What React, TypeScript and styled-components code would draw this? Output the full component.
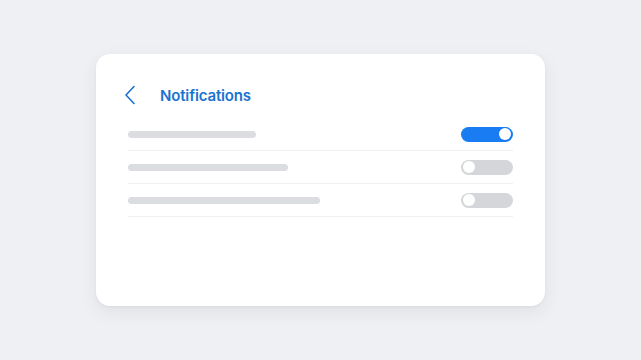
import React from "react";
import styled, { createGlobalStyle } from "styled-components";

const Global = createGlobalStyle`
  html, body { margin: 0; padding: 0; background: #eff0f3; }
  body { font-family: Inter, "Noto Sans", sans-serif; }
`;

const Page = styled.div`
  width: 641px;
  height: 360px;
  box-sizing: border-box;
  padding: 54px 96px 0 96px;
`;

const Card = styled.div`
  width: 449px;
  height: 252px;
  box-sizing: border-box;
  background: #ffffff;
  border-radius: 14px;
  box-shadow: 0 6px 18px rgba(40, 50, 70, 0.08), 0 1px 3px rgba(40, 50, 70, 0.05);
  padding: 28px 32px 0 32px;
`;

const Header = styled.div`
  display: flex;
  align-items: center;
  height: 26px;
  margin-bottom: 10px;
`;

const BackButton = styled.div`
  width: 36px;
  margin-left: -4px;
  display: flex;
  align-items: center;
  color: #1a73d0;
`;

const Title = styled.div`
  font-size: 15px;
  font-weight: 600;
  color: #1a73d0;
  letter-spacing: -0.15px;
`;

const Row = styled.div`
  display: flex;
  align-items: center;
  justify-content: space-between;
  height: 33px;
  border-bottom: 1px solid #eeeff1;
  box-sizing: border-box;
`;

const Bar = styled.div<{ $w: number }>`
  width: ${(p) => p.$w}px;
  height: 7px;
  border-radius: 4px;
  background: #dcdde0;
`;

const Toggle = styled.div<{ $on: boolean }>`
  width: 52px;
  height: 15px;
  border-radius: 8px;
  background: ${(p) => (p.$on ? "#1a7cf2" : "#d5d6d9")};
  position: relative;
  &::after {
    content: "";
    position: absolute;
    top: 1.5px;
    ${(p) => (p.$on ? "right: 2px;" : "left: 2px;")}
    width: 12px;
    height: 12px;
    border-radius: 50%;
    background: #ffffff;
  }
`;

const rows = [
  { w: 128, on: true },
  { w: 160, on: false },
  { w: 192, on: false },
];

export default function App() {
  return (
    <>
      <Global />
      <Page>
        <Card>
          <Header>
            <BackButton>
              <svg width="12" height="20" viewBox="0 0 12 20" fill="none">
                <path d="M10 1.5 L2 10 L10 18.5" stroke="currentColor" strokeWidth="1.6" strokeLinecap="round" strokeLinejoin="round" />
              </svg>
            </BackButton>
            <Title>Notifications</Title>
          </Header>
          {rows.map((r, i) => (
            <Row key={i}>
              <Bar $w={r.w} />
              <Toggle $on={r.on} />
            </Row>
          ))}
        </Card>
      </Page>
    </>
  );
}
